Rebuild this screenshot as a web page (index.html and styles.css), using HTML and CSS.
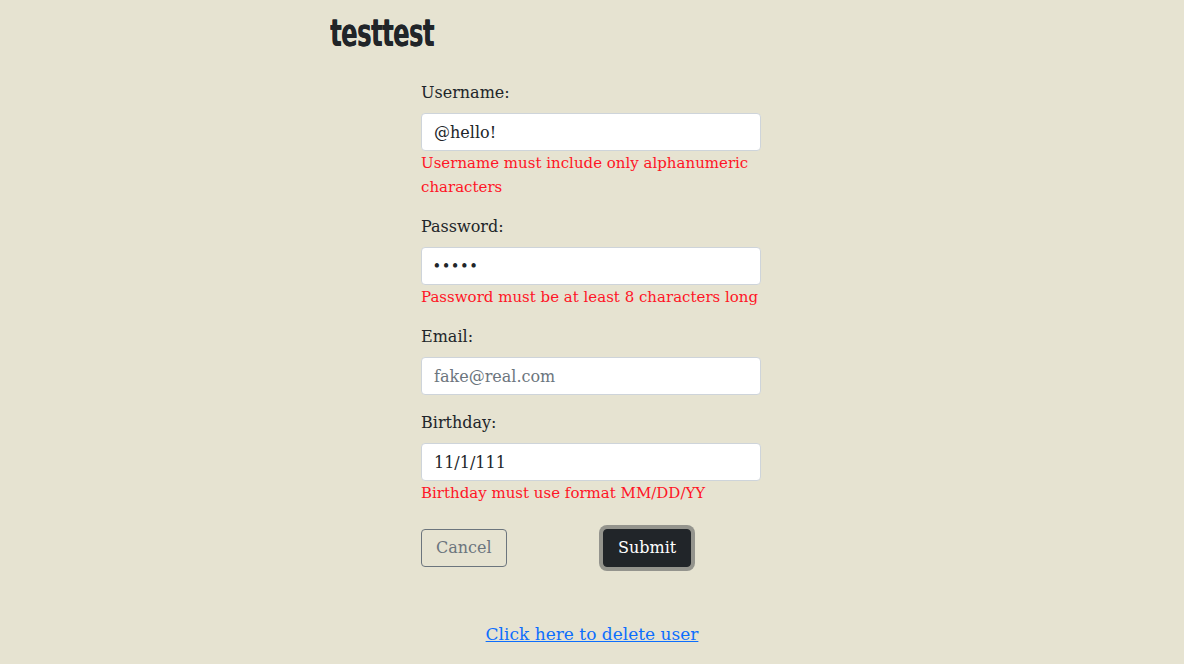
FILE: index.html
```html
<!DOCTYPE html>
<html>
<head>
<meta charset="utf-8">
<link rel="stylesheet" href="styles.css">
</head>
<body>
<div class="container">
  <h1 class="title">testtest</h1>
</div>
<form class="form">
  <div class="field">
    <label class="label">Username:</label>
    <input class="input" type="text" value="@hello!">
    <div class="error">Username must include only alphanumeric characters</div>
  </div>
  <div class="field">
    <label class="label">Password:</label>
    <input class="input input-pw" type="password" value="hello">
    <div class="error">Password must be at least 8 characters long</div>
  </div>
  <div class="field">
    <label class="label">Email:</label>
    <input class="input" type="text" placeholder="fake@real.com">
  </div>
  <div class="field">
    <label class="label">Birthday:</label>
    <input class="input" type="text" value="11/1/111">
    <div class="error">Birthday must use format MM/DD/YY</div>
  </div>
  <div class="actions">
    <div class="col"><button type="button" class="btn btn-cancel">Cancel</button></div>
    <div class="col"><button type="button" class="btn btn-submit">Submit</button></div>
  </div>
</form>
<div class="footer">
  <a class="delete-link" href="#">Click here to delete user</a>
</div>
</body>
</html>
```

FILE: styles.css
```css
* { box-sizing: border-box; }
html, body { margin: 0; padding: 0; }
body {
  background: #e6e3d1;
  color: #212529;
  font-family: "DejaVu Serif", "Liberation Serif", serif;
  font-size: 16px;
  line-height: 24px;
}
.container {
  width: 540px;
  margin: 0 auto;
  padding: 0 8px;
  height: 52px;
}
.title {
  display: inline-block;
  margin: 14px 0 0;
  font-family: "DejaVu Sans Condensed", "DejaVu Sans", sans-serif;
  font-weight: bold;
  font-size: 38px;
  line-height: 38px;
  letter-spacing: -0.5px;
  color: #212529;
  text-shadow: 0.6px 0 0 #212529;
  transform: scaleX(0.7);
  transform-origin: left center;
}
.form {
  width: 340px;
  margin: 29px 0 0 calc(50% - 171px);
}
.field { margin-bottom: 16px; }
.label {
  display: block;
  margin-bottom: 8px;
  font-size: 16px;
  line-height: 24px;
}
.input {
  display: block;
  width: 100%;
  height: 38px;
  padding: 6px 12px;
  border: 1px solid #ced4da;
  border-radius: 4px;
  background: #fff;
  color: #212529;
  font-family: inherit;
  font-size: 16px;
  line-height: 24px;
}
.input::placeholder { color: #6c757d; }
.input-pw {
  font-size: 12px;
  font-weight: bold;
  letter-spacing: 1.5px;
  padding-left: 11px;
}
.error {
  color: #ff1526;
  font-size: 15px;
  line-height: 24px;
}
.actions {
  display: grid;
  grid-template-columns: 1fr 1fr;
  column-gap: 24px;
  margin-top: 24px;
}
.btn {
  height: 38px;
  padding: 6px 14px;
  border-radius: 4px;
  font-family: inherit;
  font-size: 16px;
  line-height: 24px;
  cursor: pointer;
}
.btn-cancel {
  background: transparent;
  border: 1px solid #6c757d;
  color: #6c757d;
}
.btn-submit {
  background: #212529;
  border: 1px solid #212529;
  color: #fff;
  box-shadow: 0 0 0 4px rgba(66, 70, 73, 0.5);
}
.footer {
  text-align: center;
  margin-top: 55px;
}
.delete-link {
  color: #0d6efd;
  text-decoration: underline;
  font-size: 17px;
  line-height: 24px;
}
```
